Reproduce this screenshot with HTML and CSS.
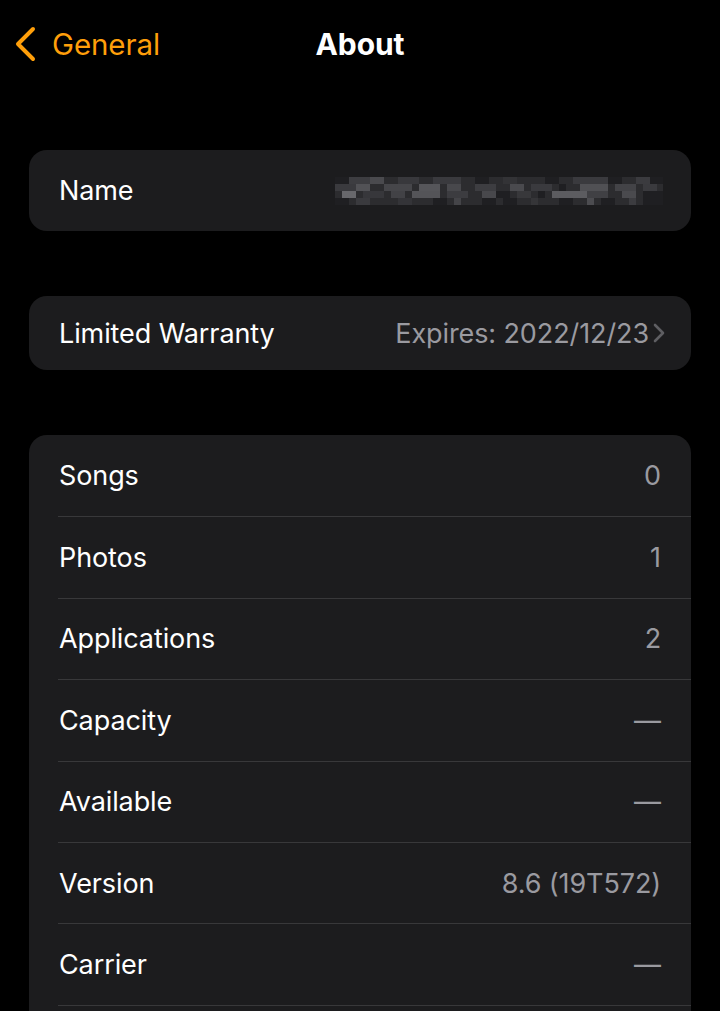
FILE: index.html
```html
<!DOCTYPE html>
<html lang="en">
<head>
    <meta charset="UTF-8">
    <meta name="viewport" content="width=device-width, initial-scale=1.0">
    <title>About</title>
    <link rel="stylesheet" href="styles.css">
</head>
<body>

<div class="nav">
    <a class="back" href="#">
        <svg class="back-icon" width="24" height="36" viewBox="0 0 24 36">
            <path d="M19 3 L4 18 L19 33" fill="none" stroke="#ff9f0a" stroke-width="4" stroke-linecap="round" stroke-linejoin="round"/>
        </svg>
        <span>General</span>
    </a>
    <div class="title">About</div>
    <div></div>
</div>

<div class="content">
    <div class="card card-name">
        <div class="row">
            <span class="label">Name</span>
            <!-- blurred device name -->
            <svg class="mosaic" width="328" height="28" viewBox="0 0 328 28">
                <rect x="0" y="0" width="328" height="28" fill="#2c2c2f"/>
                <rect x="0" y="0" width="14" height="7" fill="#1f1f22"/>
                <rect x="14" y="0" width="21" height="7" fill="#3d3d41"/>
                <rect x="35" y="0" width="14" height="7" fill="#4a4a4e"/>
                <rect x="63" y="0" width="21" height="7" fill="#38383c"/>
                <rect x="98" y="0" width="28" height="7" fill="#3a3a3e"/>
                <rect x="140" y="0" width="14" height="7" fill="#1f1f22"/>
                <rect x="168" y="0" width="14" height="7" fill="#333336"/>
                <rect x="210" y="0" width="14" height="7" fill="#1f1f22"/>
                <rect x="238" y="0" width="35" height="7" fill="#3a3a3e"/>
                <rect x="273" y="0" width="14" height="7" fill="#1f1f22"/>
                <rect x="301" y="0" width="14" height="7" fill="#3b3b3f"/>
                <rect x="315" y="0" width="13" height="7" fill="#1f1f22"/>

                <rect x="0" y="7" width="21" height="7" fill="#3a3a3e"/>
                <rect x="21" y="7" width="14" height="7" fill="#525256"/>
                <rect x="49" y="7" width="28" height="7" fill="#46464a"/>
                <rect x="84" y="7" width="21" height="7" fill="#56565a"/>
                <rect x="112" y="7" width="14" height="7" fill="#48484c"/>
                <rect x="140" y="7" width="21" height="7" fill="#3d3d41"/>
                <rect x="175" y="7" width="14" height="7" fill="#4a4a4e"/>
                <rect x="196" y="7" width="21" height="7" fill="#3a3a3e"/>
                <rect x="224" y="7" width="7" height="7" fill="#1f1f22"/>
                <rect x="245" y="7" width="28" height="7" fill="#505054"/>
                <rect x="280" y="7" width="21" height="7" fill="#434347"/>
                <rect x="308" y="7" width="14" height="7" fill="#3a3a3e"/>

                <rect x="7" y="14" width="14" height="7" fill="#68686c"/>
                <rect x="28" y="14" width="21" height="7" fill="#37373b"/>
                <rect x="56" y="14" width="14" height="7" fill="#424246"/>
                <rect x="77" y="14" width="28" height="7" fill="#545458"/>
                <rect x="112" y="14" width="21" height="7" fill="#3c3c40"/>
                <rect x="147" y="14" width="14" height="7" fill="#48484c"/>
                <rect x="161" y="14" width="14" height="7" fill="#1f1f22"/>
                <rect x="182" y="14" width="14" height="7" fill="#38383b"/>
                <rect x="203" y="14" width="7" height="7" fill="#1f1f22"/>
                <rect x="217" y="14" width="35" height="7" fill="#5c5c60"/>
                <rect x="252" y="14" width="21" height="7" fill="#404044"/>
                <rect x="287" y="14" width="14" height="7" fill="#4a4a4e"/>
                <rect x="308" y="14" width="20" height="7" fill="#1f1f22"/>

                <rect x="0" y="21" width="14" height="7" fill="#1f1f22"/>
                <rect x="21" y="21" width="14" height="7" fill="#3a3a3e"/>
                <rect x="63" y="21" width="14" height="7" fill="#343438"/>
                <rect x="98" y="21" width="14" height="7" fill="#1f1f22"/>
                <rect x="119" y="21" width="7" height="7" fill="#444448"/>
                <rect x="147" y="21" width="14" height="7" fill="#1f1f22"/>
                <rect x="168" y="21" width="14" height="7" fill="#1f1f22"/>
                <rect x="196" y="21" width="7" height="7" fill="#353538"/>
                <rect x="224" y="21" width="14" height="7" fill="#1f1f22"/>
                <rect x="252" y="21" width="7" height="7" fill="#4c4c50"/>
                <rect x="266" y="21" width="14" height="7" fill="#1f1f22"/>
                <rect x="294" y="21" width="7" height="7" fill="#3c3c40"/>
                <rect x="308" y="21" width="20" height="7" fill="#1f1f22"/>
            </svg>
        </div>
    </div>

    <div class="card card-warranty">
        <div class="row">
            <span class="label">Limited Warranty</span>
            <span class="value">Expires: 2022/12/23
                <svg class="chevron" width="12" height="20" viewBox="0 0 12 20">
                    <path d="M2 2 L10 10 L2 18" fill="none" stroke="#5e5e62" stroke-width="2.6" stroke-linecap="round" stroke-linejoin="round"/>
                </svg>
            </span>
        </div>
    </div>

    <div class="card card-list">
        <div class="row"><span class="label">Songs</span><span class="value">0</span></div>
        <div class="row"><span class="label">Photos</span><span class="value">1</span></div>
        <div class="row"><span class="label">Applications</span><span class="value">2</span></div>
        <div class="row"><span class="label">Capacity</span><span class="value">—</span></div>
        <div class="row"><span class="label">Available</span><span class="value">—</span></div>
        <div class="row"><span class="label">Version</span><span class="value">8.6 (19T572)</span></div>
        <div class="row"><span class="label">Carrier</span><span class="value">—</span></div>
        <div class="row"></div>
    </div>
</div>

</body>
</html>
```

FILE: styles.css
```css
body {
    margin: 0;
    background-color: #000000;
    color: #ffffff;
    font-family: Inter, "Noto Sans", sans-serif;
    height: 1011px;
    overflow: hidden;
}
.nav {
    display: grid;
    grid-template-columns: 1fr auto 1fr;
    align-items: center;
    height: 88px;
}
.back {
    display: flex;
    align-items: center;
    gap: 14px;
    padding-left: 14px;
    color: #ff9f0a;
    text-decoration: none;
    font-size: 29.5px;
    letter-spacing: -0.1px;
}
.title {
    font-size: 30px;
    font-weight: 700;
    letter-spacing: -0.1px;
}
.content {
    padding: 0 29px;
}
.card {
    background-color: #1c1c1e;
    border-radius: 18px;
    overflow: hidden;
}
.card-name {
    margin-top: 62px;
}
.card-name .row {
    height: 81px;
}
.card-warranty {
    margin-top: 65px;
}
.card-warranty .row {
    height: 74px;
}
.card-list {
    margin-top: 65px;
}
.row {
    display: flex;
    justify-content: space-between;
    align-items: center;
    height: 81.4px;
    padding: 0 30px;
    font-size: 27px;
    letter-spacing: -0.1px;
}
.card-list .row + .row {
    border-top: 1px solid #38383a;
    margin-left: 29px;
    padding-left: 1px;
    height: 80.4px;
}
.value {
    display: flex;
    align-items: center;
    gap: 4px;
    color: #9a9aa0;
}
.chevron {
    margin-right: -4px;
}
.mosaic {
    display: block;
    margin-right: -2px;
}
```
